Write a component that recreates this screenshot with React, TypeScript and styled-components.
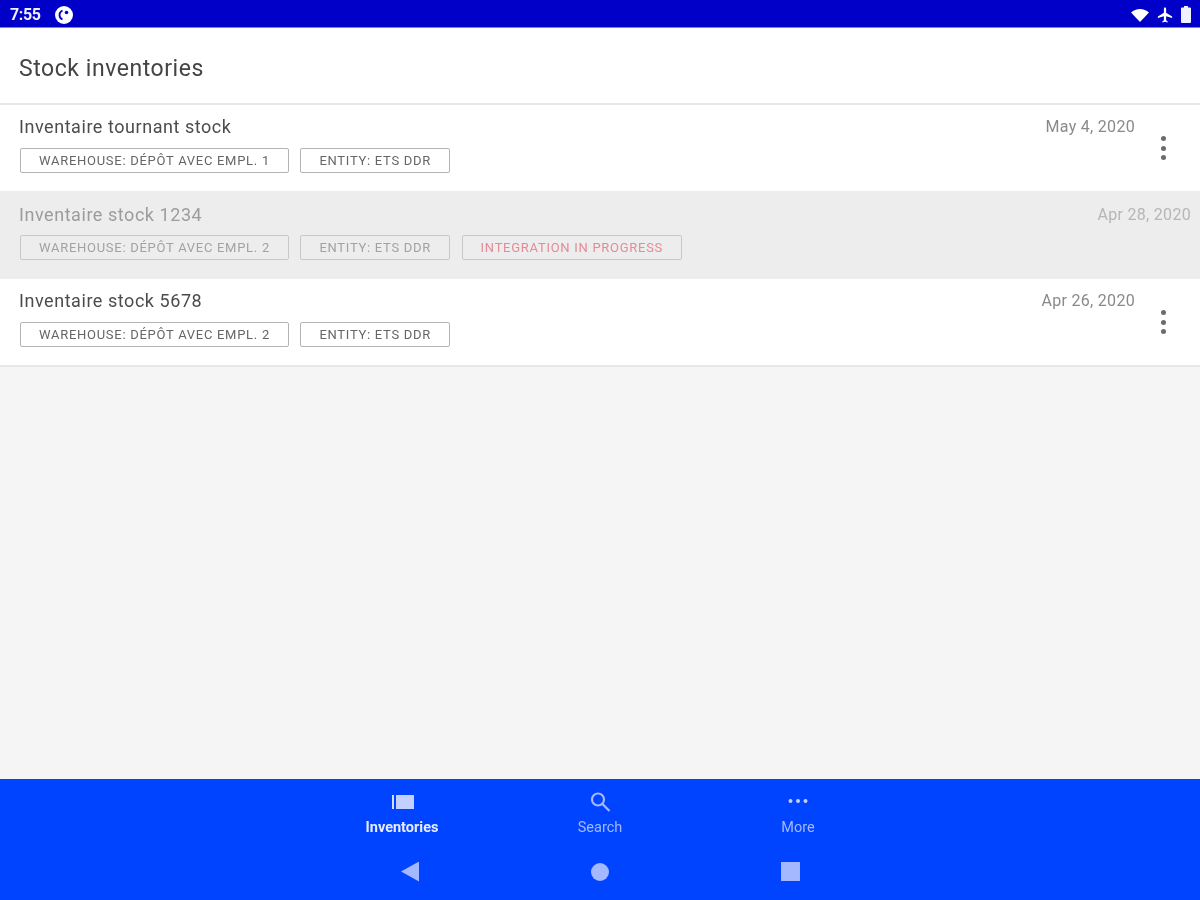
import React from 'react';
import styled, { createGlobalStyle } from 'styled-components';

interface InventoryRow {
  title: string;
  date: string;
  tags: string[];
  integrating?: boolean;
}

const rows: InventoryRow[] = [
  {
    title: 'Inventaire tournant stock',
    date: 'May 4, 2020',
    tags: ['WAREHOUSE: DÉPÔT AVEC EMPL. 1', 'ENTITY: ETS DDR'],
  },
  {
    title: 'Inventaire stock 1234',
    date: 'Apr 28, 2020',
    tags: ['WAREHOUSE: DÉPÔT AVEC EMPL. 2', 'ENTITY: ETS DDR'],
    integrating: true,
  },
  {
    title: 'Inventaire stock 5678',
    date: 'Apr 26, 2020',
    tags: ['WAREHOUSE: DÉPÔT AVEC EMPL. 2', 'ENTITY: ETS DDR'],
  },
];

const GlobalStyle = createGlobalStyle`
  html, body {
    margin: 0;
    padding: 0;
    background: #f5f5f5;
  }
  * {
    box-sizing: border-box;
  }
`;

const Screen = styled.div`
  width: 1200px;
  height: 900px;
  display: flex;
  flex-direction: column;
  overflow: hidden;
  background: #f5f5f5;
  font-family: Roboto, 'Liberation Sans', sans-serif;
  filter: blur(0.6px);
`;

const StatusBar = styled.div`
  height: 28px;
  flex: none;
  display: flex;
  align-items: center;
  justify-content: space-between;
  padding: 2px 9px 0 10px;
  background: #0000c8;
  border-bottom: 1px solid #7f7fe0;
`;

const StatusGroup = styled.div`
  display: flex;
  align-items: center;
`;

const Clock = styled.span`
  width: 45px;
  font-size: 16px;
  font-weight: 700;
  letter-spacing: -0.4px;
  color: #f0f0ff;
`;

const Header = styled.div`
  height: 77px;
  flex: none;
  display: flex;
  align-items: center;
  padding: 6px 19px 0;
  background: #fff;
  border-bottom: 2px solid #e6e6e6;
  font-size: 23px;
  letter-spacing: 0.55px;
  color: #444;
`;

const List = styled.div`
  flex: 1;
  display: flex;
  flex-direction: column;
`;

const Row = styled.div<{ $integrating?: boolean }>`
  height: ${({ $integrating }) => ($integrating ? '88px' : '86px')};
  display: flex;
  padding: ${({ $integrating }) => ($integrating ? '13px' : '11px')} 0 0 19px;
  background: ${({ $integrating }) => ($integrating ? '#ededed' : '#fff')};
  &:last-child {
    height: 88px;
    border-bottom: 2px solid #e8e8e8;
  }
`;

const RowBody = styled.div`
  flex: 1;
  min-width: 0;
`;

const Title = styled.div<{ $integrating?: boolean }>`
  height: ${({ $integrating }) => ($integrating ? '21px' : '22px')};
  line-height: 22px;
  font-size: 18px;
  letter-spacing: 0.55px;
  color: ${({ $integrating }) => ($integrating ? '#9c9c9c' : '#4c4c4c')};
`;

const Tags = styled.div`
  display: flex;
  gap: 11.5px;
  margin: 10px 0 0 1px;
`;

const Tag = styled.span<{ $integrating?: boolean }>`
  height: 25px;
  display: flex;
  align-items: center;
  padding: 0 18px;
  border: 1px solid ${({ $integrating }) => ($integrating ? '#c8c8c8' : '#b4b4b4')};
  border-radius: 2px;
  font-size: 13px;
  letter-spacing: 0.72px;
  white-space: nowrap;
  color: ${({ $integrating }) => ($integrating ? '#a2a2a2' : '#666')};
`;

const StatusTag = styled(Tag)`
  color: #e58b95;
`;

const RowSide = styled.div<{ $integrating?: boolean }>`
  flex: none;
  display: flex;
  align-items: flex-start;
  padding-right: ${({ $integrating }) => ($integrating ? '9px' : '10px')};
`;

const DateLabel = styled.span<{ $integrating?: boolean }>`
  line-height: 22px;
  font-size: 16px;
  letter-spacing: 0.3px;
  color: ${({ $integrating }) => ($integrating ? '#b6b6b6' : '#8a8a8a')};
`;

const MenuButton = styled.div`
  width: 55px;
  height: 50px;
  display: flex;
  flex-direction: column;
  align-items: center;
  justify-content: center;
  gap: 4.5px;
  padding-left: 1px;
  margin-top: 7px;
`;

const MenuDot = styled.span`
  width: 5px;
  height: 5px;
  border-radius: 50%;
  background: #6b6b6b;
`;

const BottomBar = styled.div`
  height: 121px;
  flex: none;
  display: flex;
  flex-direction: column;
  background: #0044ff;
`;

const Tabs = styled.div`
  height: 66px;
  display: flex;
  justify-content: center;
`;

const Tab = styled.div`
  width: 198px;
  display: flex;
  flex-direction: column;
  align-items: center;
  padding-top: 11px;
`;

const TabIcon = styled.div`
  width: 24px;
  height: 24px;
  display: flex;
  align-items: center;
  justify-content: center;
`;

const TabLabel = styled.span<{ $active?: boolean }>`
  margin-top: 5px;
  font-size: 14.5px;
  font-weight: ${({ $active }) => ($active ? 700 : 400)};
  color: ${({ $active }) => ($active ? '#e6ebff' : '#a3b8ff')};
`;

const NavRow = styled.div`
  flex: 1;
  display: flex;
  justify-content: center;
  align-items: center;
  gap: 172px;
  padding: 0 0 2px 1px;
`;

const NavBack = styled.span`
  width: 18px;
  height: 20px;
  background: #a3b8ff;
  clip-path: polygon(100% 0, 100% 100%, 0 50%);
`;

const NavHome = styled.span`
  width: 18px;
  height: 18px;
  border-radius: 50%;
  background: #a3b8ff;
`;

const NavRecent = styled.span`
  width: 19px;
  height: 19px;
  background: #a3b8ff;
`;

const StatusIcon = styled.svg<{ $gap?: number }>`
  display: block;
  margin-left: ${({ $gap }) => $gap ?? 0}px;
`;

const WifiIcon = () => (
  <StatusIcon width="20" height="16" viewBox="0 0 20 16">
    <path d="M1 5.500C3.500 3.300 6.600 2 10 2s6.500 1.300 9 3.500L10 15z" fill="#fff" />
  </StatusIcon>
);

const PlaneIcon = () => (
  <StatusIcon $gap={6} width="18" height="18" viewBox="0 0 24 24">
    <path
      d="M21 16v-2l-8-5V3.500C13 2.670 12.330 2 11.500 2S10 2.670 10 3.500V9l-8 5v2l8-2.500V19l-2 1.500V22l3.500-1 3.500 1v-1.500L13 19v-5.500z"
      transform="translate(0.500 0)"
      fill="#fff"
    />
  </StatusIcon>
);

const BatteryIcon = () => (
  <StatusIcon $gap={7} width="10" height="17" viewBox="0 0 10 17">
    <path d="M3 0h4v1.500h2a1 1 0 0 1 1 1V16a1 1 0 0 1-1 1H1a1 1 0 0 1-1-1V2.500a1 1 0 0 1 1-1h2z" fill="#f0f0ff" />
  </StatusIcon>
);

const NotificationIcon = () => (
  <StatusIcon width="18" height="18" viewBox="0 0 18 18">
    <circle cx="9" cy="9" r="9" fill="#fff" />
    <path d="M7.500 4.500C5.300 5.500 4.500 7.200 4.500 9s0.800 3.500 3 4.500" fill="none" stroke="#0000c8" strokeWidth="1.800" />
    <circle cx="11.500" cy="6.500" r="1.800" fill="#0000c8" />
  </StatusIcon>
);

const InventoriesIcon = () => (
  <svg width="24" height="16" viewBox="0 0 24 16">
    <rect x="2" y="1" width="2" height="14" fill="#d5ddff" />
    <rect x="6" y="1" width="18" height="14" fill="#c3cfff" />
  </svg>
);

const SearchIcon = () => (
  <svg width="24" height="24" viewBox="0 0 24 24" fill="none" stroke="#a3b8ff" strokeWidth="2.200">
    <circle cx="10" cy="9.500" r="6" />
    <path d="M14.500 14l7 7" />
  </svg>
);

const MoreIcon = () => (
  <svg width="24" height="24" viewBox="0 0 24 24" fill="#c3cfff">
    <circle cx="4.500" cy="11" r="2" />
    <circle cx="12" cy="11" r="2" />
    <circle cx="19.500" cy="11" r="2" />
  </svg>
);

const App: React.FC = () => (
  <Screen>
    <GlobalStyle />
    <StatusBar>
      <StatusGroup>
        <Clock>7:55</Clock>
        <NotificationIcon />
      </StatusGroup>
      <StatusGroup>
        <WifiIcon />
        <PlaneIcon />
        <BatteryIcon />
      </StatusGroup>
    </StatusBar>
    <Header>Stock inventories</Header>
    <List>
      {rows.map((row) => (
        <Row key={row.title} $integrating={row.integrating}>
          <RowBody>
            <Title $integrating={row.integrating}>{row.title}</Title>
            <Tags>
              {row.tags.map((tag) => (
                <Tag key={tag} $integrating={row.integrating}>
                  {tag}
                </Tag>
              ))}
              {row.integrating && <StatusTag $integrating>INTEGRATION IN PROGRESS</StatusTag>}
            </Tags>
          </RowBody>
          <RowSide $integrating={row.integrating}>
            <DateLabel $integrating={row.integrating}>{row.date}</DateLabel>
            {!row.integrating && (
              <MenuButton>
                <MenuDot />
                <MenuDot />
                <MenuDot />
              </MenuButton>
            )}
          </RowSide>
        </Row>
      ))}
    </List>
    <BottomBar>
      <Tabs>
        <Tab>
          <TabIcon>
            <InventoriesIcon />
          </TabIcon>
          <TabLabel $active>Inventories</TabLabel>
        </Tab>
        <Tab>
          <TabIcon>
            <SearchIcon />
          </TabIcon>
          <TabLabel>Search</TabLabel>
        </Tab>
        <Tab>
          <TabIcon>
            <MoreIcon />
          </TabIcon>
          <TabLabel>More</TabLabel>
        </Tab>
      </Tabs>
      <NavRow>
        <NavBack />
        <NavHome />
        <NavRecent />
      </NavRow>
    </BottomBar>
  </Screen>
);

export default App;
